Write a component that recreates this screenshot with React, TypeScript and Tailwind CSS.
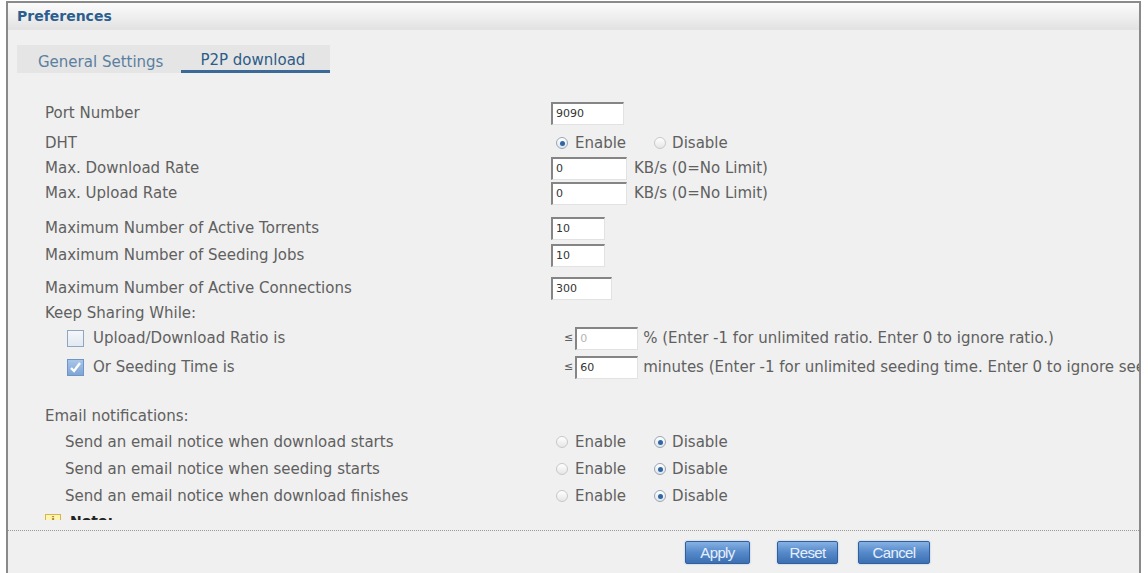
import type { ReactNode } from "react";

const input =
  "h-[23px] border-t-2 border-l-2 border-r border-b border-t-[#858585] border-l-[#858585] border-r-[#e2e2e2] border-b-[#e2e2e2] bg-white pl-[3px] font-['DejaVu_Sans',sans-serif] text-[11px] leading-[20px] text-[#333]";

function Radio({ on }: { on?: boolean }) {
  return (
    <span
      className={
        on
          ? "flex h-[12px] w-[12px] items-center justify-center rounded-full border border-[#9aa6b4] bg-linear-to-b from-white to-[#dfe5ec]"
          : "flex h-[12px] w-[12px] items-center justify-center rounded-full border border-[#c8c8c8] bg-linear-to-b from-white to-[#e6e6e6]"
      }
    >
      {on && <span className="h-[5px] w-[5px] rounded-full bg-[#2f66a3]" />}
    </span>
  );
}

function RadioPair({ enabled, wide }: { enabled: boolean; wide?: boolean }) {
  return (
    <div className={wide ? "ml-[5px] flex items-center" : "ml-[5px] flex items-center"}>
      <Radio on={enabled} />
      <span className="ml-[7px]">Enable</span>
      <span className={wide ? "ml-[28px]" : "ml-[28px]"}>
        <Radio on={!enabled} />
      </span>
      <span className="ml-[6px]">Disable</span>
    </div>
  );
}

function Check({ on }: { on?: boolean }) {
  return on ? (
    <span className="flex h-[17px] w-[17px] items-center justify-center border border-[#6f95c4] bg-linear-to-b from-[#a9c6ea] to-[#7ea5d6]">
      <svg width="13" height="13" viewBox="0 0 13 13">
        <path d="M2 7 L5 10 L11 2" fill="none" stroke="#fff" strokeWidth="2.4" />
      </svg>
    </span>
  ) : (
    <span className="h-[17px] w-[17px] border border-[#8fa6c0] bg-linear-to-b from-[#f4f7fb] to-[#e3e9f1]" />
  );
}

function Row({ label, mt, indent, children }: { label: ReactNode; mt: string; indent?: string; children?: ReactNode }) {
  return (
    <div className={`flex h-[24px] shrink-0 items-center whitespace-nowrap ${mt}`}>
      <div className={`flex w-[506px] shrink-0 items-center ${indent ?? ""}`}>{label}</div>
      <div className="flex items-center">{children}</div>
    </div>
  );
}

function Btn({ children, w }: { children: ReactNode; w: string }) {
  return (
    <button
      type="button"
      className={`${w} h-[23px] rounded-[2px] border border-[#2f5f9d] bg-linear-to-b from-[#86b1e3] via-[#5589c9] to-[#3d70b2] font-['Liberation_Sans',sans-serif] text-[15px] leading-[21px] tracking-[-0.6px] text-[#e6efff] shadow-[0_0_2px_#9bb8dc]`}
    >
      {children}
    </button>
  );
}

export default function App() {
  return (
    <div className="h-[573px] w-[1148px] overflow-hidden bg-white font-['DejaVu_Sans',sans-serif] text-[15px] text-[#606060]">
      <div className="ml-[6px] mt-[1px] flex h-[572px] w-[1135px] flex-col border-x-2 border-t-2 border-[#8a8a8a] bg-[#f0f0f0]">
        {/* title bar */}
        <div className="flex h-[27px] shrink-0 items-center bg-linear-to-b from-[#fbfbfb] to-[#e2e2e2] pl-[9px] text-[14px] font-bold text-[#2b5e8e]">
          Preferences
        </div>

        {/* tabs */}
        <div className="ml-[9px] mt-[15px] flex h-[28px] w-[313px] shrink-0 bg-[#e5e5e5]">
          <div className="flex items-center pl-[21px] pt-[6px] text-[#5b7f9f]">General Settings</div>
          <div className="ml-[18px] flex flex-1 items-center border-b-[3px] border-[#3b6998] pl-[19px] pt-[6px] text-[#2d5c88]">
            P2P download
          </div>
        </div>

        {/* form */}
        <div className="flex h-[447px] shrink-0 flex-col overflow-hidden pl-[37px] pt-[28px]">
          <Row label="Port Number" mt="mt-0">
            <div className={`${input} w-[73px]`}>9090</div>
          </Row>
          <Row label="DHT" mt="mt-[6px]">
            <RadioPair enabled wide />
          </Row>
          <Row label="Max. Download Rate" mt="mt-[1px]">
            <div className={`${input} w-[76px]`}>0</div>
            <span className="ml-[7px]">KB/s (0=No Limit)</span>
          </Row>
          <Row label="Max. Upload Rate" mt="mt-[1px]">
            <div className={`${input} w-[76px]`}>0</div>
            <span className="ml-[7px]">KB/s (0=No Limit)</span>
          </Row>
          <Row label="Maximum Number of Active Torrents" mt="mt-[11px]">
            <div className={`${input} w-[54px]`}>10</div>
          </Row>
          <Row label="Maximum Number of Seeding Jobs" mt="mt-[3px]">
            <div className={`${input} w-[54px]`}>10</div>
          </Row>
          <Row label="Maximum Number of Active Connections" mt="mt-[9px]">
            <div className={`${input} w-[61px]`}>300</div>
          </Row>
          <Row label="Keep Sharing While:" mt="mt-[1px]" />
          <Row
            mt="mt-[1px]"
            indent="pl-[22px]"
            label={
              <>
                <Check />
                <span className="ml-[9px]">Upload/Download Ratio is</span>
              </>
            }
          >
            <span className="ml-[13px] text-[11px]">≤</span>
            <div className={`${input} ml-[2px] w-[63px] text-[#b5b5b5]`}>0</div>
            <span className="ml-[5px]">% (Enter -1 for unlimited ratio. Enter 0 to ignore ratio.)</span>
          </Row>
          <Row
            mt="mt-[5px]"
            indent="pl-[22px]"
            label={
              <>
                <Check on />
                <span className="ml-[9px]">Or Seeding Time is</span>
              </>
            }
          >
            <span className="ml-[13px] text-[11px]">≤</span>
            <div className={`${input} ml-[2px] w-[63px]`}>60</div>
            <span className="ml-[5px]">minutes (Enter -1 for unlimited seeding time. Enter 0 to ignore seeding time.)</span>
          </Row>

          <Row label="Email notifications:" mt="mt-[25px]" />
          <Row label="Send an email notice when download starts" mt="mt-[2px]" indent="pl-[20px]">
            <RadioPair enabled={false} />
          </Row>
          <Row label="Send an email notice when seeding starts" mt="mt-[3px]" indent="pl-[20px]">
            <RadioPair enabled={false} />
          </Row>
          <Row label="Send an email notice when download finishes" mt="mt-[3px]" indent="pl-[20px]">
            <RadioPair enabled={false} />
          </Row>

          <div className="mt-[4px] flex h-[18px] shrink-0 items-center">
            <span className="flex h-[14px] w-[16px] items-center justify-center border border-[#d7b54a] bg-[#fff4b0] text-[9px] font-bold text-[#9a7a10]">
              i
            </span>
            <span className="ml-[9px] text-[14px] font-bold text-[#222]">Note:</span>
          </div>
        </div>

        {/* footer */}
        <div className="mt-[10px] shrink-0 border-t border-dotted border-[#9a9a9a]" />
        <div className="mt-[10px] flex shrink-0 pl-[677px]">
          <Btn w="w-[65px]">Apply</Btn>
          <span className="ml-[27px]">
            <Btn w="w-[61px]">Reset</Btn>
          </span>
          <span className="ml-[20px]">
            <Btn w="w-[72px]">Cancel</Btn>
          </span>
        </div>
      </div>
    </div>
  );
}
